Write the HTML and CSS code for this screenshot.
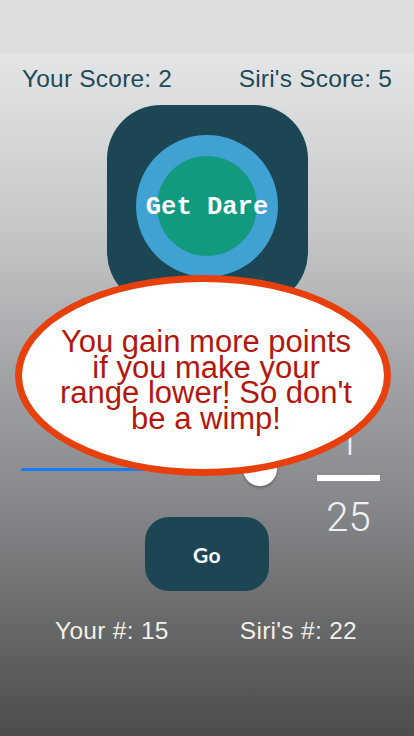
FILE: index.html
```html
<!DOCTYPE html>
<html>
<head>
<meta charset="utf-8">
<link rel="stylesheet" href="styles.css">
</head>
<body>
<div class="screen">
  <div class="status"></div>
  <div class="main">
    <div class="scores">
      <span>Your Score: 2</span>
      <span>Siri's Score: 5</span>
    </div>
    <div class="dare">
      <div class="ring">
        <div class="core"></div>
        <span class="dare-label">Get Dare</span>
      </div>
    </div>
    <div class="range-row">
      <div class="slider">
        <div class="track"></div>
        <div class="thumb"></div>
      </div>
      <div class="fraction">
        <div class="num">1</div>
        <div class="bar"></div>
        <div class="den">25</div>
      </div>
    </div>
    <button class="go">Go</button>
    <div class="picks">
      <span>Your #: 15</span>
      <span>Siri's #: 22</span>
    </div>
    <div class="tip">
      <p>You gain more points<br>if you make your<br>range lower! So don't<br>be a wimp!</p>
    </div>
  </div>
</div>
</body>
</html>
```
FILE: styles.css
```css
* { box-sizing: border-box; }
html, body { margin: 0; padding: 0; }
body { width: 414px; height: 736px; overflow: hidden; font-family: "Liberation Sans", Arial, sans-serif; }
.screen { width: 414px; height: 736px; display: flex; flex-direction: column; }
.status { height: 53px; background: #dedede; flex: none; }
.main {
  position: relative;
  flex: 1;
  display: flex;
  flex-direction: column;
  align-items: center;
  background: linear-gradient(to bottom, #e4e5e6 0%, #c6c8ca 25%, #a4a6a9 45%, #87898c 65%, #6a6b6d 82%, #4b4c4e 100%);
}
.scores {
  width: 100%;
  display: flex;
  justify-content: space-between;
  padding: 13px 22px 0 22px;
  font-size: 24.5px;
  letter-spacing: 0.2px;
  line-height: 25px;
  color: #1d4a58;
}
.dare {
  margin-top: 14px;
  width: 201px;
  height: 201px;
  border-radius: 54px;
  background: #1c4654;
  display: flex;
  align-items: center;
  justify-content: center;
}
.ring {
  position: relative;
  width: 142px;
  height: 142px;
  border-radius: 50%;
  background: #3fa2d3;
  display: flex;
  align-items: center;
  justify-content: center;
}
.core { width: 100px; height: 100px; border-radius: 50%; background: #129a7e; }
.dare-label {
  position: absolute;
  left: 50%;
  top: 50%;
  transform: translate(-50%, -45%);
  white-space: nowrap;
  font-family: "Liberation Mono", "Courier New", monospace;
  font-weight: bold;
  font-size: 25.5px;
  color: #ffffff;
}
.range-row {
  margin-top: 114px;
  width: 100%;
  height: 97px;
  display: flex;
  align-items: flex-start;
  padding-left: 21px;
}
.slider {
  position: relative;
  width: 256px;
  height: 97px;
  margin-top: 32px;
}
.track { position: absolute; left: 0; top: 16px; width: 230px; height: 3px; background: #1a7cf0; border-radius: 2px; }
.thumb {
  position: absolute;
  left: 222px;
  top: 0;
  width: 34px;
  height: 34px;
  border-radius: 50%;
  background: #ffffff;
  box-shadow: 0 2px 3px rgba(0,0,0,0.25);
}
.fraction {
  margin-left: 40px;
  width: 63px;
  display: flex;
  flex-direction: column;
  align-items: center;
  font-family: Roboto, "Liberation Sans", sans-serif;
  font-weight: 300;
  color: #f0f0f2;
}
.num, .den { font-size: 40px; line-height: 44px; }
.bar { margin-top: 11px; width: 63px; height: 6px; background: #ffffff; }
.den { margin-top: 15px; }
.go {
  width: 124px;
  height: 74px;
  border: none;
  border-radius: 24px;
  background: #1c4654;
  color: #ffffff;
  font-family: Lato, "Liberation Sans", sans-serif;
  font-weight: bold;
  font-size: 21px;
  letter-spacing: 0.5px;
  padding: 0;
  flex: none;
}
.picks {
  margin-top: 27px;
  width: 100%;
  display: flex;
  justify-content: space-between;
  padding: 0 57px 0 55px;
  font-size: 24.5px;
  letter-spacing: 0.3px;
  line-height: 25px;
  color: #f2f0e6;
}
.tip {
  position: absolute;
  left: 15px;
  top: 222px;
  width: 376px;
  height: 201px;
  border: 7px solid #e8400c;
  border-radius: 50%;
  background: #ffffff;
  display: flex;
  align-items: center;
  justify-content: center;
  padding: 9px 0 0 6px;
}
.tip p {
  margin: 0;
  text-align: center;
  font-size: 31px;
  line-height: 25.5px;
  color: #b3160c;
  white-space: nowrap;
}
```
